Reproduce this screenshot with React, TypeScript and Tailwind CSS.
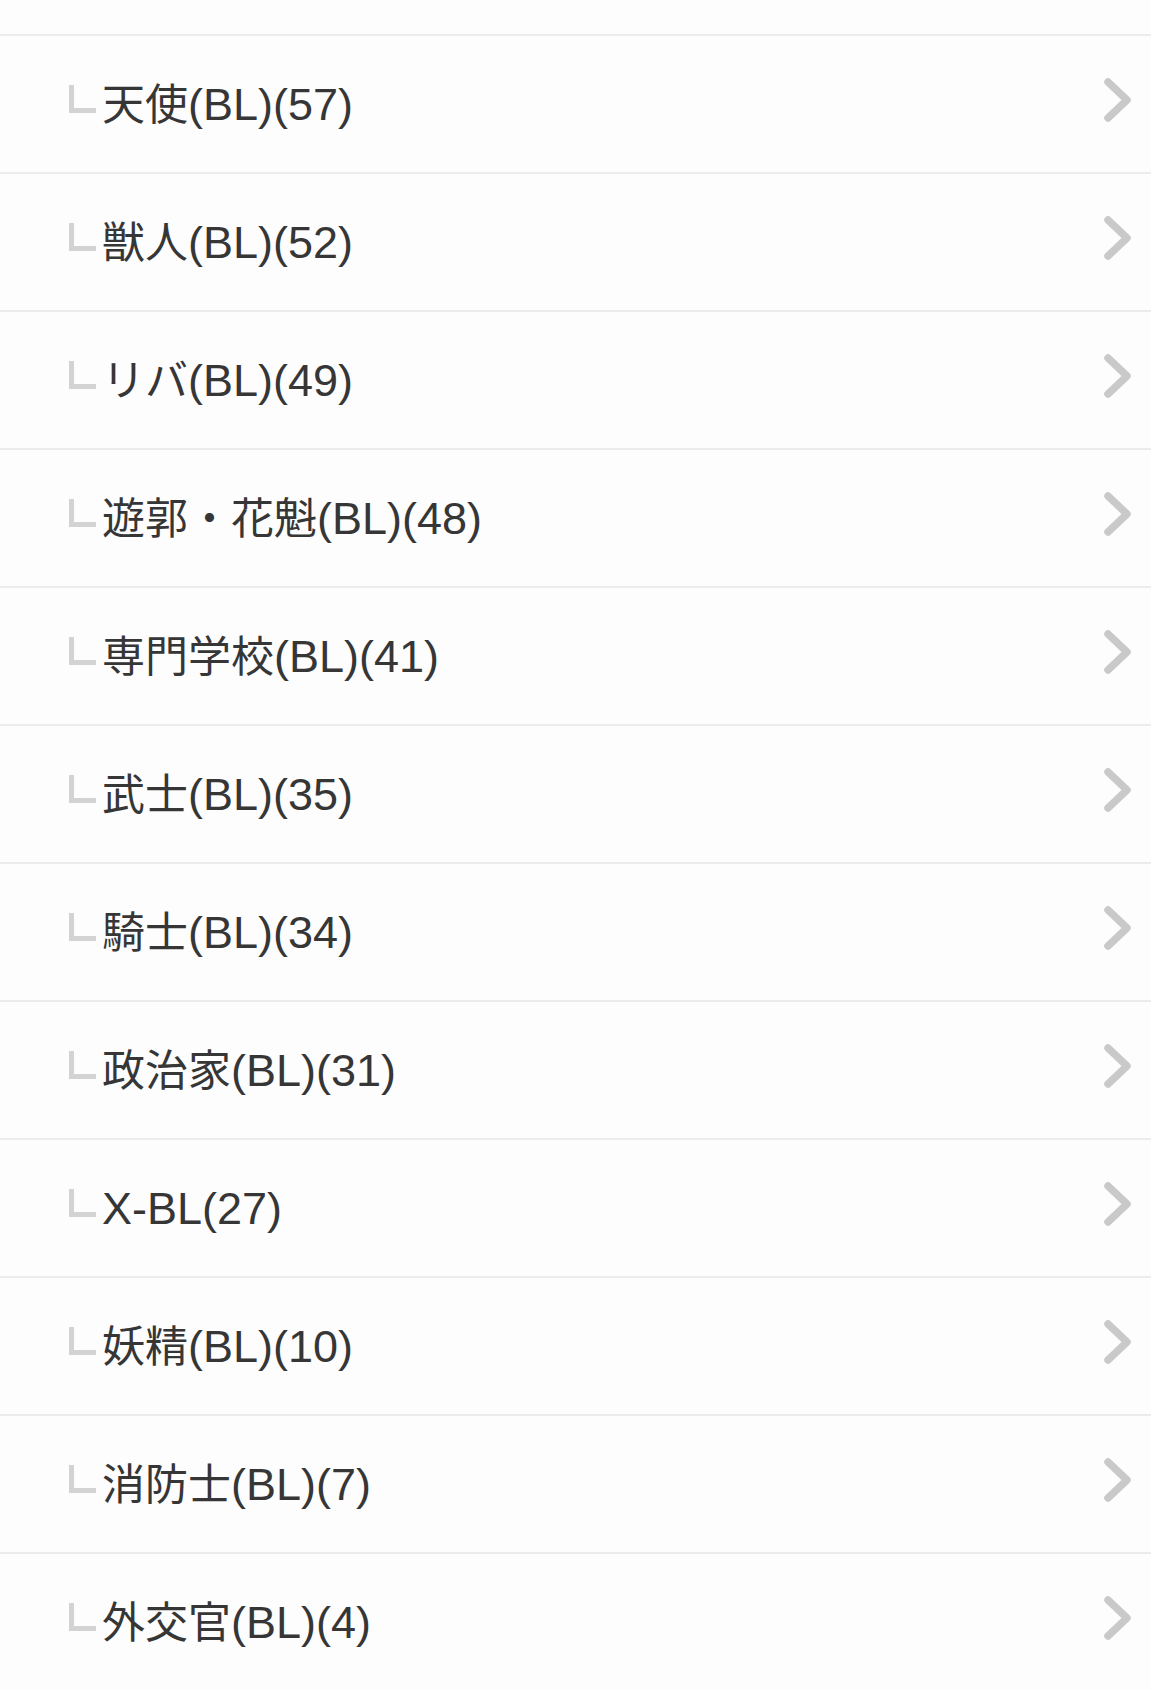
const items = [
  '天使(BL)(57)',
  '獣人(BL)(52)',
  'リバ(BL)(49)',
  '遊郭・花魁(BL)(48)',
  '専門学校(BL)(41)',
  '武士(BL)(35)',
  '騎士(BL)(34)',
  '政治家(BL)(31)',
  'X-BL(27)',
  '妖精(BL)(10)',
  '消防士(BL)(7)',
  '外交官(BL)(4)',
];

// 和文と欧文で文字サイズを変える（欧文のほうが少し大きく見える）
const splitRuns = (label: string) =>
  label.split(/([\u3000-\u9fff\uff00-\uffef]+)/).filter(Boolean);

const isCjk = (s: string) => /[\u3000-\u9fff\uff00-\uffef]/.test(s);

const Chevron = () => (
  <svg width="30" height="46" viewBox="0 0 30 46" className="shrink-0 mb-[8px]">
    <polyline
      points="6,5 25,23 6,41"
      fill="none"
      stroke="#c9c9c9"
      strokeWidth="7.5"
      strokeLinecap="round"
      strokeLinejoin="round"
    />
  </svg>
);

const CategoryRow = ({ label }: { label: string }) => (
  <a
    href="#"
    className="flex items-center h-[138px] border-t-2 border-[#ececec] pl-[69px] pr-[19px] box-border"
  >
    {/* 子カテゴリの印 */}
    <span className="w-[27px] h-[28px] border-l-[5px] border-b-[5px] border-[#d3d3d3] shrink-0 mb-[10px]" />
    <span className="flex-1 ml-[6px] leading-none text-[#363636] whitespace-nowrap">
      {splitRuns(label).map((run, i) => (
        <span key={i} className={isCjk(run) ? 'text-[43px]' : 'text-[45px]'}>
          {run}
        </span>
      ))}
    </span>
    <Chevron />
  </a>
);

export default function App() {
  return (
    <div
      className="w-[1151px] bg-[#fdfdfd] overflow-hidden"
      style={{ fontFamily: '"Liberation Sans", "Noto Sans CJK JP", sans-serif' }}
    >
      <div className="h-[34px]" />
      {items.map((label) => (
        <CategoryRow key={label} label={label} />
      ))}
    </div>
  );
}
